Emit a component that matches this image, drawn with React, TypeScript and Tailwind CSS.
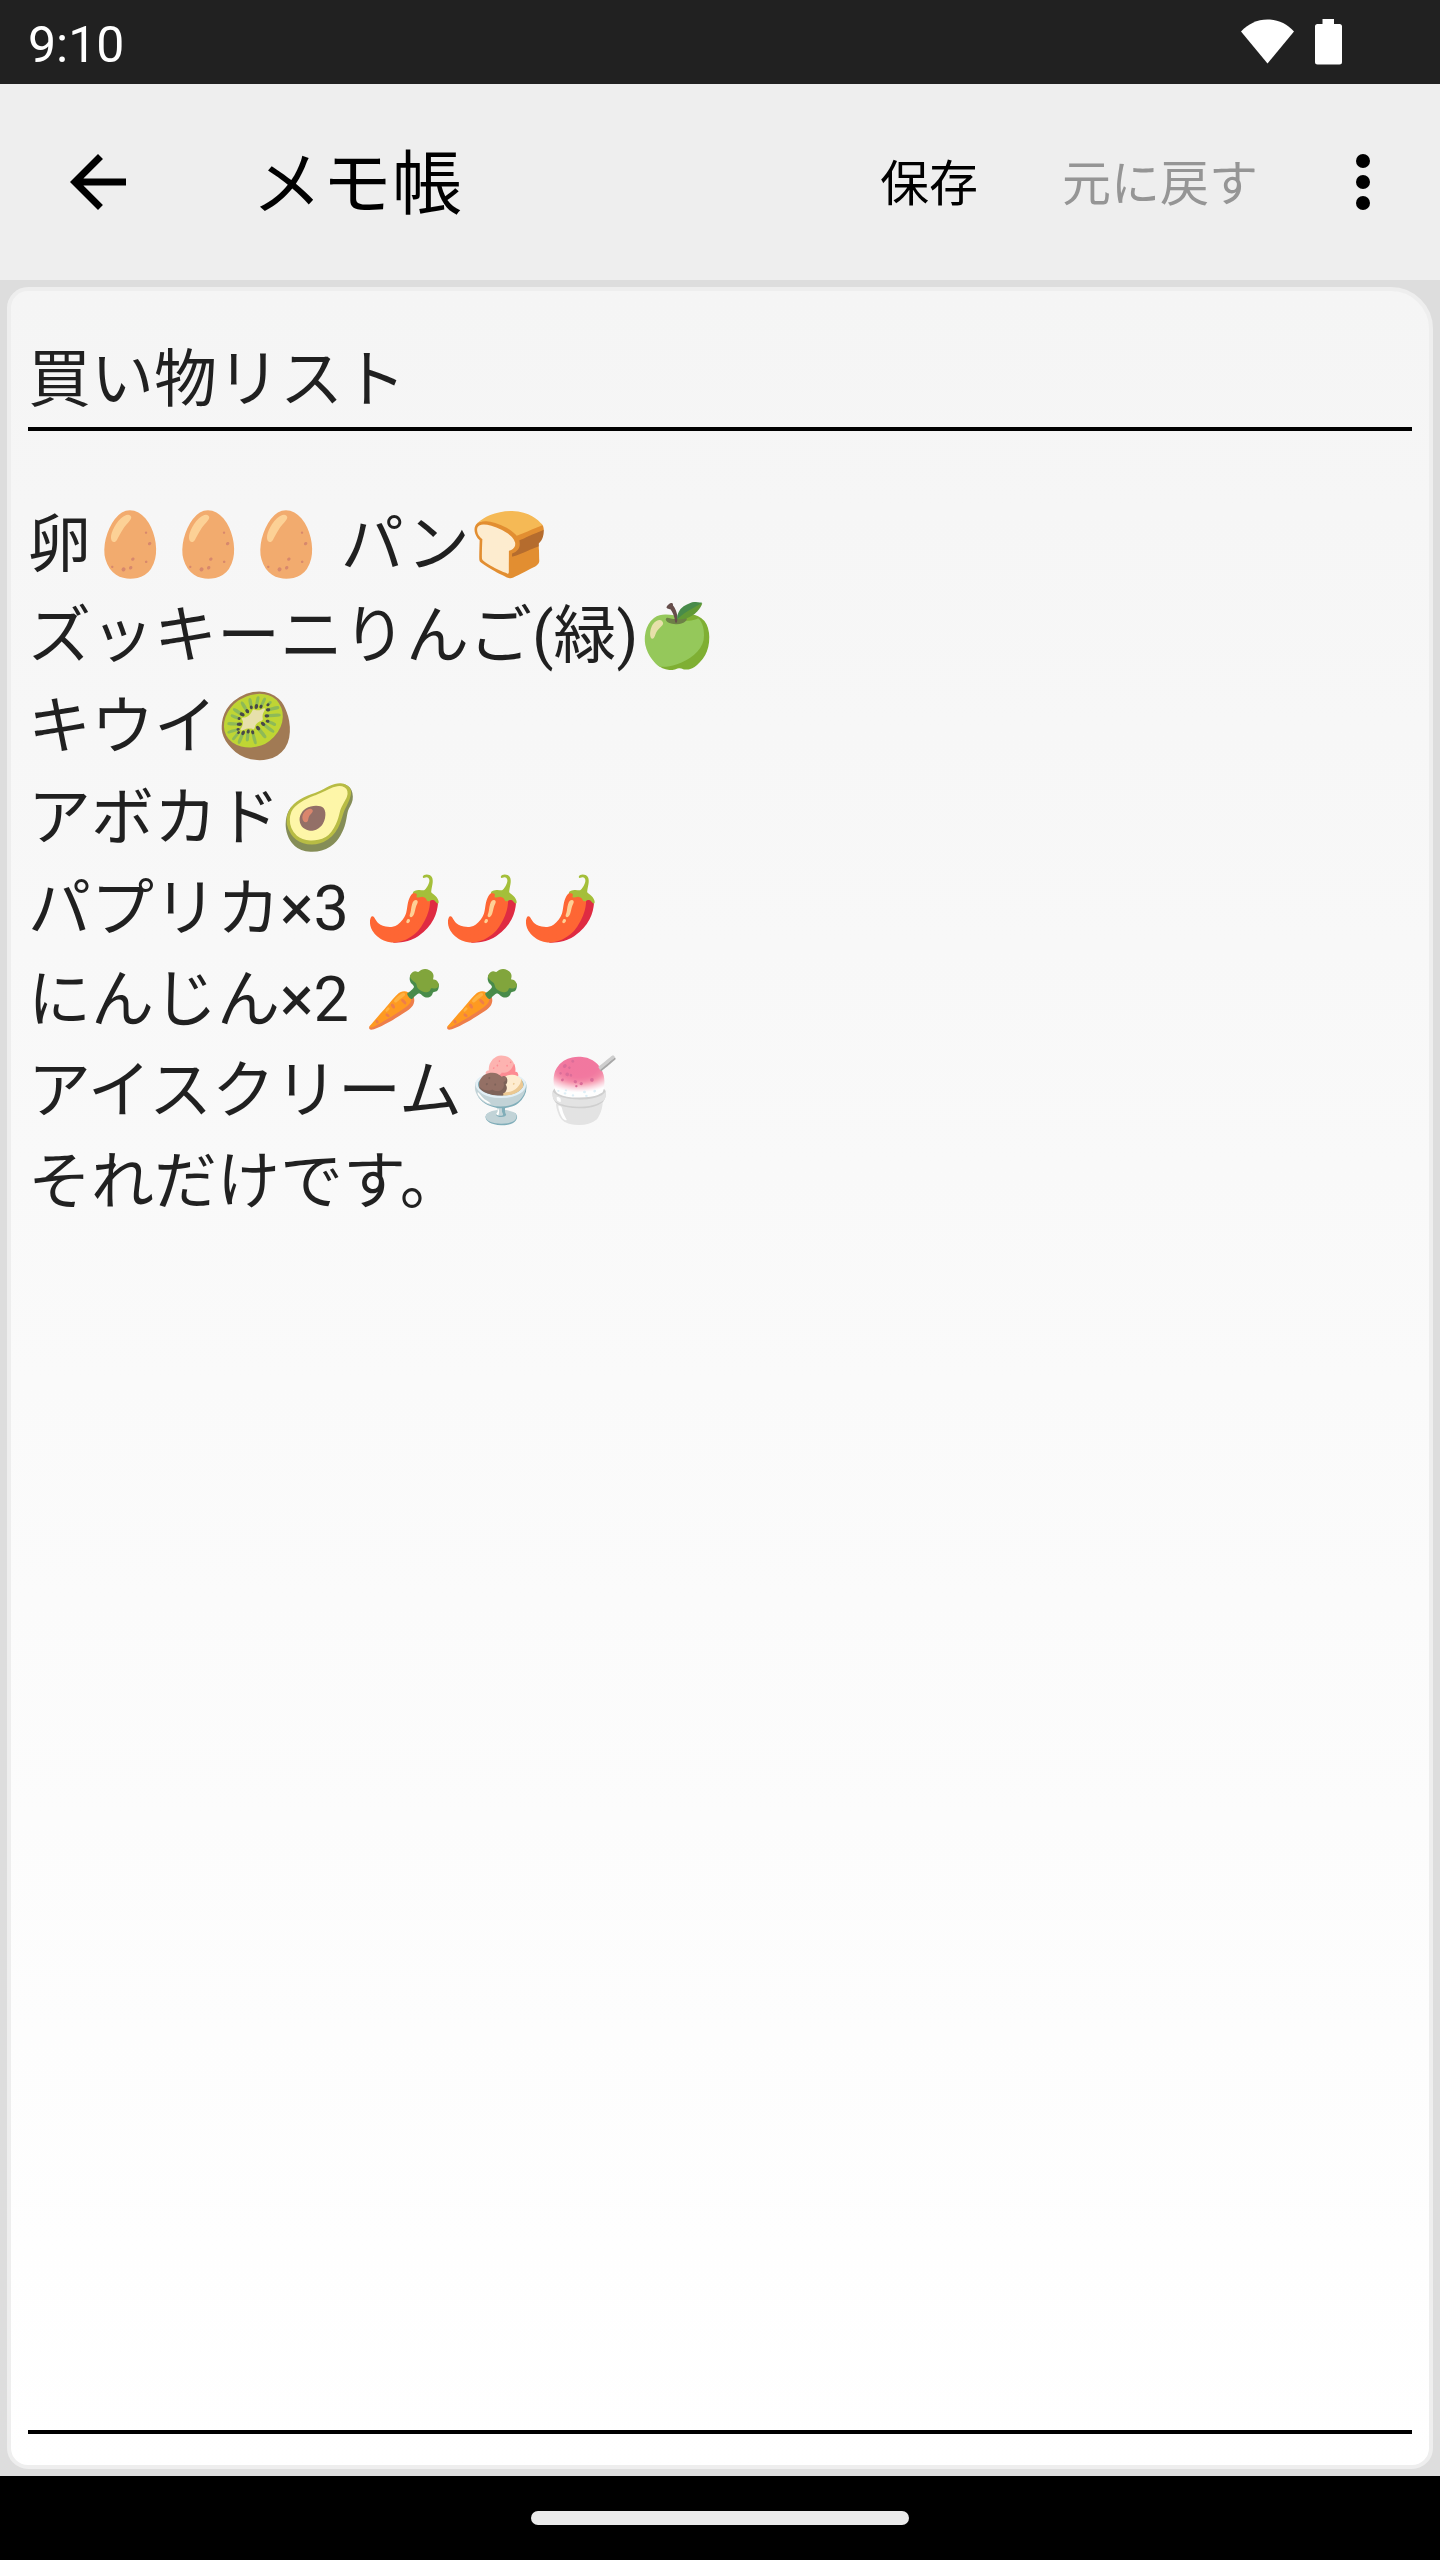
import { useState } from "react";

const INITIAL_TITLE = "買い物リスト";
const INITIAL_BODY = [
  "卵🥚🥚🥚 パン🍞",
  "ズッキーニりんご(緑)🍏",
  "キウイ🥝",
  "アボカド🥑",
  "パプリカ×3 🌶️🌶️🌶️",
  "にんじん×2 🥕🥕",
  "アイスクリーム🍨🍧",
  "それだけです。",
].join("\n");

function StatusBar() {
  return (
    <div className="flex h-[84px] shrink-0 items-center bg-[#212121] pr-[98px] pl-7 text-white">
      <span className="grow pt-1.5 text-[50px] leading-[56px]">9:10</span>
      <svg className="mr-[21px] h-[46px] w-[53px]" viewBox="0 0 53 46" fill="currentColor" aria-hidden="true">
        <path d="M0 12.500C7 5 16 .5 26.500 .5S46 5 53 12.500L26.500 44.500Z" />
      </svg>
      <svg className="h-[46px] w-[27px]" viewBox="0 0 27 46" fill="currentColor" aria-hidden="true">
        <path d="M7.500 0h11.500v5h5.500A2.500 2.500 0 0 1 27 7.500v35.500a2.500 2.500 0 0 1-2.500 2.500h-22A2.500 2.500 0 0 1 0 43V7.500A2.500 2.500 0 0 1 2.500 5h5Z" />
      </svg>
    </div>
  );
}

function AppBar({ changed, onUndo }: { changed: boolean; onUndo: () => void }) {
  return (
    <header className="flex h-[196px] shrink-0 items-center bg-[#eeeeee] pr-[35px] pl-14 text-black">
      <button type="button" aria-label="戻る" className="shrink-0">
        <svg className="size-[84px]" viewBox="0 0 24 24" fill="currentColor" aria-hidden="true">
          <path d="M20 11H7.830l5.590-5.590L12 4l-8 8 8 8 1.410-1.410L7.830 13H20v-2z" />
        </svg>
      </button>
      <h1 className="grow pt-1.5 pl-[112px] text-[70px] leading-[84px]">メモ帳</h1>
      <button type="button" className="mr-[84px] pt-1.5 text-[49px] leading-[60px]">
        保存
      </button>
      <button
        type="button"
        disabled={!changed}
        onClick={onUndo}
        className="mr-[63px] pt-1.5 text-[49px] leading-[60px] disabled:text-[#959595]"
      >
        元に戻す
      </button>
      <button type="button" aria-label="その他のオプション" className="shrink-0">
        <svg className="size-[84px]" viewBox="0 0 24 24" fill="currentColor" aria-hidden="true">
          <circle cx="12" cy="6" r="2" />
          <circle cx="12" cy="12" r="2" />
          <circle cx="12" cy="18" r="2" />
        </svg>
      </button>
    </header>
  );
}

export default function App() {
  const [title, setTitle] = useState(INITIAL_TITLE);
  const [body, setBody] = useState(INITIAL_BODY);
  const changed = title !== INITIAL_TITLE || body !== INITIAL_BODY;
  const undo = () => {
    setTitle(INITIAL_TITLE);
    setBody(INITIAL_BODY);
  };

  return (
    <div lang="ja" className="flex min-h-screen flex-col bg-[#dddddd] font-['Roboto','Noto_Sans_CJK_JP',sans-serif]">
      <StatusBar />
      <AppBar changed={changed} onUndo={undo} />
      <main className="flex grow flex-col p-[7px]">
        <div className="flex grow flex-col rounded-[21px] rounded-tr-[42px] border-4 border-[#eeeeee] bg-linear-to-b from-[#f5f5f5] to-white bg-origin-border px-[17px] pt-9 pb-[31px]">
          <input
            aria-label="タイトル"
            value={title}
            onChange={(e) => setTitle(e.target.value)}
            className="h-[104px] w-full border-b-4 border-black pb-2 text-[63px] leading-[91px] text-black/87 outline-none"
          />
          <textarea
            aria-label="本文"
            value={body}
            onChange={(e) => setBody(e.target.value)}
            className="mt-[68px] w-full grow resize-none border-b-4 border-black text-[63px] leading-[91px] text-black/87 outline-none"
          />
        </div>
      </main>
      <div className="flex h-[84px] shrink-0 items-center justify-center bg-black">
        <div className="h-[14px] w-[378px] rounded-full bg-[#ebebeb]" />
      </div>
    </div>
  );
}
